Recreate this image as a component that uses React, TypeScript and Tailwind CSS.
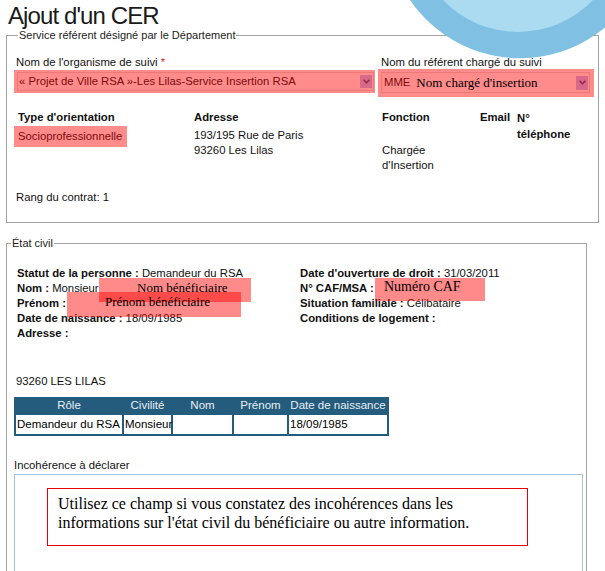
import React from "react";

const Chevron = () => (
  <svg width="7" height="5" viewBox="0 0 7 5">
    <path d="M0.6 0.8 L3.5 3.8 L6.4 0.8" fill="none" stroke="#9a2b4b" strokeWidth="1.6" />
  </svg>
);

const Redact = ({ className, children }: { className: string; children: React.ReactNode }) => (
  <div className={`absolute bg-[rgba(255,0,0,0.46)] font-['Liberation_Serif','Times_New_Roman',serif] text-black leading-[16px] whitespace-nowrap ${className}`}>
    {children}
  </div>
);

export default function App() {
  return (
    <div className="relative w-[605px] h-[571px] overflow-hidden bg-white font-['Liberation_Sans',Arial,sans-serif] text-[11.3px] text-[#111]">
      <h1 className="h-[28px] pl-[8px] text-[24px] leading-[32px] tracking-[-0.9px] text-[#1a1a1a]">Ajout d'un CER</h1>

      <fieldset className="ml-[6px] w-[593px] border border-[#a3a3a3] pl-[7px] pr-[3px] pb-[17px]">
        <legend className="ml-[4px] px-[1px] text-[11px] leading-[14px] text-[#222]">
          Service référent désigné par le Département
        </legend>
        <div className="flex gap-[3px] pt-[13px]">
          <div className="w-[361px]">
            <div className="h-[14px] leading-[14px] pl-[2px]">
              Nom de l'organisme de suivi <span className="text-[#e0262a]">*</span>
            </div>
            <div className="mt-[1px] h-[23px] bg-[#ff8b8b] pt-[2px] pl-[3px] pr-[1px]">
              <div className="h-[19px] border border-[#ee7777] flex items-center pl-[1px] pr-[1px]">
                <span className="flex-1 whitespace-nowrap text-[#7c0b0b]">
                  « Projet de Ville RSA »-Les Lilas-Service Insertion RSA
                </span>
                <span className="w-[12px] h-[13px] bg-[#d8698b] flex items-center justify-center">
                  <Chevron />
                </span>
              </div>
            </div>
          </div>
          <div className="w-[216px]">
            <div className="h-[14px] leading-[14px] pl-[3px] whitespace-nowrap">Nom du référent chargé du suivi</div>
            <div className="h-[28px] bg-[#ff8b8b] pt-[3px] pl-[3px] pr-[4px]">
              <div className="h-[21px] border border-[#ee7777] flex items-center pl-[2px] pr-[1px]">
                <span className="text-[#7c0b0b]">MME</span>
                <span className="ml-[6px] flex-1 whitespace-nowrap font-['Liberation_Serif','Times_New_Roman',serif] text-[13px] text-black">
                  Nom chargé d'insertion
                </span>
                <span className="w-[12px] h-[14px] bg-[#d8698b] flex items-center justify-center">
                  <Chevron />
                </span>
              </div>
            </div>
          </div>
        </div>

        <div className="mt-[13px] grid grid-cols-[180px_188px_98px_37px_1fr] leading-[15px]">
          <div>
            <div className="pl-[4px] font-bold">Type d'orientation</div>
            <div className="mt-[1px] w-[113px] h-[21px] leading-[21px] pl-[4px] bg-[#ff8b8b] text-[#7c0b0b]">
              Socioprofessionnelle
            </div>
          </div>
          <div>
            <div className="font-bold">Adresse</div>
            <div className="mt-[3px]">193/195 Rue de Paris</div>
            <div>93260 Les Lilas</div>
          </div>
          <div>
            <div className="font-bold">Fonction</div>
            <div className="mt-[18px]">Chargée</div>
            <div>d'Insertion</div>
          </div>
          <div className="font-bold">Email</div>
          <div className="font-bold leading-[16px]">
            <div>N°</div>
            <div>téléphone</div>
          </div>
        </div>

        <div className="mt-[17px] pl-[2px] leading-[15px]">Rang du contrat: 1</div>
      </fieldset>

      <fieldset className="mt-[13px] ml-[6px] w-[581px] border border-[#a3a3a3] pb-[20px]">
        <legend className="ml-[4px] px-[1px] text-[11px] leading-[14px] text-[#222]">État civil</legend>

        <div className="relative mt-[16px] flex pl-[10px] leading-[15px] whitespace-nowrap">
          <div className="w-[283px]">
            <div><b>Statut de la personne :</b> Demandeur du RSA</div>
            <div><b>Nom :</b> Monsieur</div>
            <div><b>Prénom :</b></div>
            <div><b>Date de naissance :</b> 18/09/1985</div>
            <div><b>Adresse :</b></div>
          </div>
          <div>
            <div><b>Date d'ouverture de droit :</b> 31/03/2011</div>
            <div><b>N° CAF/MSA :</b></div>
            <div><b>Situation familiale :</b> Célibataire</div>
            <div><b>Conditions de logement :</b></div>
          </div>

          <Redact className="left-[92px] top-[12px] w-[152px] h-[24px] pl-[38px] pt-[2px] text-[13px]">Nom bénéficiaire</Redact>
          <Redact className="left-[60px] top-[26px] w-[174px] h-[25px] pl-[38px] pt-[2px] text-[13px]">Prénom bénéficiaire</Redact>
          <Redact className="left-[368px] top-[12px] w-[110px] h-[23px] pl-[9px] pt-[1px] text-[14px]">Numéro CAF</Redact>
        </div>

        <div className="mt-[33px] pl-[9px] leading-[15px]">93260 LES LILAS</div>

        <div className="mt-[8px] ml-[7px] w-[375px] bg-[#245c7d] px-[2px] pb-[2px] text-[11.5px]">
          <div className="grid grid-cols-[106px_47px_59px_53px_98px] gap-x-[2px] h-[18px] items-center text-center text-[#e8eff4]">
            <div>Rôle</div>
            <div>Civilité</div>
            <div>Nom</div>
            <div>Prénom</div>
            <div className="whitespace-nowrap">Date de naissance</div>
          </div>
          <div className="grid grid-cols-[106px_47px_59px_53px_98px] gap-x-[2px] h-[19px] leading-[19px] text-black">
            <div className="bg-white pl-[1px] whitespace-nowrap">Demandeur du RSA</div>
            <div className="bg-white pl-[1px]">Monsieur</div>
            <div className="bg-white" />
            <div className="bg-white" />
            <div className="bg-white pl-[1px]">18/09/1985</div>
          </div>
        </div>

        <div className="mt-[22px] pl-[7px] leading-[15px]">Incohérence à déclarer</div>
        <div className="mt-[1px] ml-[7px] w-[569px] h-[110px] border border-[#a7c3df] pt-[13px] pl-[32px]">
          <div className="w-[481px] h-[58px] border border-[#e8000b] pl-[10px] pt-[5px] font-['Liberation_Serif','Times_New_Roman',serif] text-[16px] leading-[19px] text-black whitespace-nowrap">
            Utilisez ce champ si vous constatez des incohérences dans les
            <br />
            informations sur l'état civil du bénéficiaire ou autre information.
          </div>
        </div>
      </fieldset>

      <svg className="pointer-events-none absolute left-0 top-0 z-10 w-[605px] h-[70px]" width="605" height="70" viewBox="0 0 605 70">
        <path d="M410 0 A133 133 0 0 0 630 0 Z" fill="#80c1e3" />
        <path d="M443 0 A104 104 0 0 0 593 0 Z" fill="#aadbf0" />
      </svg>
    </div>
  );
}
